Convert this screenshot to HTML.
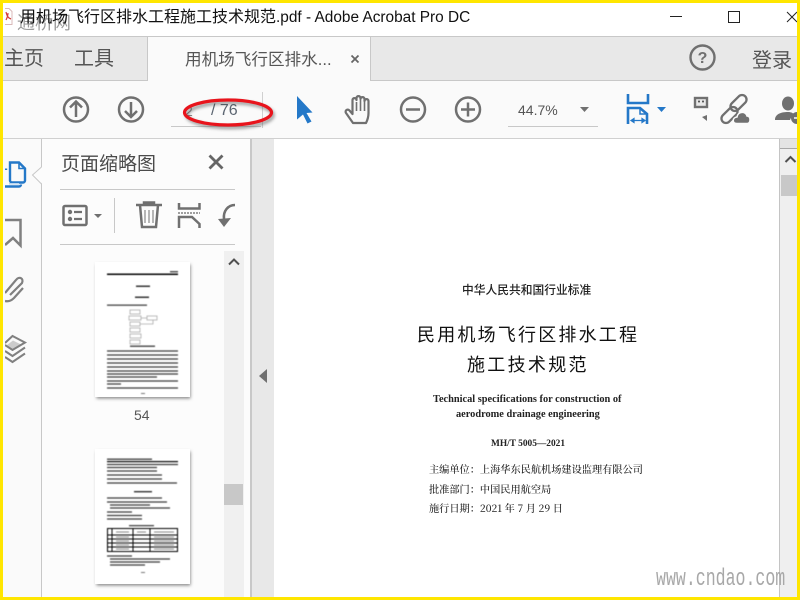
<!DOCTYPE html>
<html><head><meta charset="utf-8">
<style>
html,body{margin:0;padding:0;background:#fff}
#r{position:relative;width:800px;height:600px;overflow:hidden;background:#fff;font-family:"Liberation Sans","Noto Sans CJK SC",sans-serif}
.a{position:absolute;white-space:nowrap;line-height:1}
svg{position:absolute;left:0;top:0}
</style></head><body>
<div id="r">
<!-- regions -->
<div class="a" style="left:0;top:36px;width:800px;height:1px;background:#c8c8c8"></div>
<div class="a" style="left:0;top:37px;width:800px;height:43px;background:#e8e8e8"></div>
<div class="a" style="left:0;top:80px;width:800px;height:1px;background:#c8c8c8"></div>
<div class="a" style="left:0;top:81px;width:800px;height:57px;background:#fafafa"></div>
<div class="a" style="left:147px;top:37px;width:224px;height:44px;background:#fafafa;border-left:1px solid #c8c8c8;border-right:1px solid #c8c8c8;box-sizing:border-box"></div>
<div class="a" style="left:0;top:138px;width:800px;height:1px;background:#d0d0d0"></div>
<div class="a" style="left:0;top:139px;width:41px;height:461px;background:#fafafa"></div>
<div class="a" style="left:41px;top:139px;width:1px;height:461px;background:#c8c8c8"></div>
<div class="a" style="left:42px;top:139px;width:208px;height:461px;background:#fcfcfc"></div>
<div class="a" style="left:250px;top:139px;width:2px;height:461px;background:#c8c8c8"></div>
<div class="a" style="left:252px;top:139px;width:22px;height:461px;background:#e8e8e8"></div>
<div class="a" style="left:274px;top:139px;width:505px;height:461px;background:#fff"></div>
<div class="a" style="left:779px;top:139px;width:1px;height:461px;background:#c4c4c4"></div>
<div class="a" style="left:780px;top:139px;width:17px;height:461px;background:#efefef"></div>
<div class="a" style="left:780px;top:139px;width:17px;height:9px;background:#e4e4e4;border-bottom:1px solid #a8a8a8"></div>
<div class="a" style="left:781px;top:175px;width:16px;height:21px;background:#c8c8c8"></div>
<!-- thumb scrollbar -->
<div class="a" style="left:224px;top:251px;width:20px;height:349px;background:#f0f0f0"></div>
<div class="a" style="left:224px;top:484px;width:19px;height:21px;background:#c8c8c8"></div>
<!-- panel rules -->
<div class="a" style="left:60px;top:189px;width:175px;height:1px;background:#c8c8c8"></div>
<div class="a" style="left:60px;top:244px;width:175px;height:1px;background:#c8c8c8"></div>
<div class="a" style="left:114px;top:198px;width:1px;height:35px;background:#c8c8c8"></div>
<div class="a" style="left:171px;top:126px;width:90px;height:1px;background:#c8c8c8"></div>
<div class="a" style="left:262px;top:92px;width:1px;height:36px;background:#d0d0d0"></div>
<div class="a" style="left:508px;top:126px;width:90px;height:1px;background:#c8c8c8"></div>

<!-- title -->
<div class="a" style="left:17px;top:14px;font-size:18px;color:#9c9c9c">通桥网</div>
<div class="a" style="left:20px;top:10px;font-size:16px;color:#111">用机场飞行区排水工程施工技术规范<span style="font-size:15.4px">.pdf - Adobe Acrobat Pro DC</span></div>
<!-- tabs -->
<div class="a" style="left:4px;top:49px;font-size:20px;color:#555">主页</div>
<div class="a" style="left:74px;top:49px;font-size:20px;color:#555">工具</div>
<div class="a" style="left:185px;top:52px;font-size:16.6px;color:#555">用机场飞行区排水...</div>
<div class="a" style="left:752px;top:51px;font-size:20px;color:#555">登录</div>
<!-- toolbar text -->
<div class="a" style="left:185px;top:104px;font-size:14px;color:#888">2</div>
<div class="a" style="left:211px;top:103px;font-size:16px;color:#5a6470">/ 76</div>
<div class="a" style="left:518px;top:103px;font-size:14px;color:#555">44.7%</div>
<!-- panel text -->
<div class="a" style="left:61px;top:155px;font-size:19px;color:#4b4b4b">页面缩略图</div>
<div class="a" style="left:134px;top:408px;font-size:14px;color:#555">54</div>

<!-- page text -->
<div class="a" style="left:462px;top:284px;font-size:11.75px;color:#222;font-family:'Noto Sans CJK SC',sans-serif;font-weight:500">中华人民共和国行业标准</div>
<div class="a" style="left:417px;top:325px;font-size:18px;letter-spacing:2.2px;color:#111;font-family:'Noto Sans CJK SC',sans-serif">民用机场飞行区排水工程</div>
<div class="a" style="left:467px;top:355px;font-size:18px;letter-spacing:2.3px;color:#111;font-family:'Noto Sans CJK SC',sans-serif">施工技术规范</div>
<div class="a" style="left:433px;top:395px;font-size:10.35px;font-weight:bold;color:#222;font-family:'Liberation Serif',serif">Technical specifications for construction of</div>
<div class="a" style="left:456px;top:410px;font-size:10.35px;font-weight:bold;color:#222;font-family:'Liberation Serif',serif">aerodrome drainage engineering</div>
<div class="a" style="left:491px;top:440px;font-size:9.4px;font-weight:bold;color:#222;font-family:'Liberation Serif',serif">MH/T 5005—2021</div>
<div class="a" style="left:429px;top:464px;font-size:10.2px;color:#222;font-family:'Noto Serif CJK SC',serif;font-weight:500">主编单位：上海华东民航机场建设监理有限公司</div>
<div class="a" style="left:429px;top:484px;font-size:10.2px;color:#222;font-family:'Noto Serif CJK SC',serif;font-weight:500">批准部门：中国民用航空局</div>
<div class="a" style="left:429px;top:503px;font-size:10.2px;color:#222;font-family:'Noto Serif CJK SC',serif;font-weight:500">施行日期：2021 年 7 月 29 日</div>

<svg width="800" height="600" viewBox="0 0 800 600">
<defs>
<filter id="b"><feGaussianBlur stdDeviation=".55"/></filter>
<filter id="s" x="-20%" y="-20%" width="140%" height="140%"><feGaussianBlur stdDeviation="1.5"/></filter>
</defs>
<!-- pdf icon -->
<path d="M5 8.500h4l3 3v13H5" fill="#fff" stroke="#d8b8b8" stroke-width="1"/>
<path d="M6 12c1 4 2 6 5 7M6 20c1-2 2-4 2-7" fill="none" stroke="#d23a3a" stroke-width="1.200"/>
<!-- window controls -->
<path d="M670 16.500h12" stroke="#222" stroke-width="1"/>
<rect x="728.500" y="11.500" width="11" height="11" fill="none" stroke="#222"/>
<path d="M787 12l10 10M797 12l-10 10" stroke="#222" stroke-width="1"/>
<!-- tab close -->
<path d="M351.500 55.500l7 7M358.500 55.500l-7 7" stroke="#666" stroke-width="1.800"/>
<!-- help -->
<circle cx="702.500" cy="57.500" r="12" fill="none" stroke="#707070" stroke-width="2.400"/>
<text x="702.500" y="63" font-size="16" font-weight="bold" fill="#707070" text-anchor="middle" font-family="Liberation Sans">?</text>
<!-- up / down -->
<g fill="none" stroke="#707070" stroke-width="2.500">
<circle cx="76" cy="109.500" r="12"/><path d="M76 117v-15M70 107.500l6-6 6 6"/>
<circle cx="131" cy="109.500" r="12"/><path d="M131 102v15M125 111l6 6 6-6"/>
<circle cx="413" cy="109.500" r="12"/><path d="M406 109.500h14"/>
<circle cx="468" cy="109.500" r="12"/><path d="M461 109.500h14M468 102.500v14"/>
</g>
<!-- arrow cursor -->
<path d="M297 96l15.500 16.500-6 .5 5 8.500-4 2-4.500-9-6 5z" fill="#2478c8"/>
<!-- hand -->
<path d="M353 123l-7-10c-1.500-2.500 1.500-4.500 3.500-2.500l3 3.500V100c0-2.500 4-2.500 4 0v-2c0-2.500 4-2.500 4 0v1c0-2.500 4-2.500 4 0v2c0-2.500 4-2.500 4 0v12c0 4-1 7-2.500 10z" fill="none" stroke="#707070" stroke-width="2.200" stroke-linejoin="round"/>
<path d="M356.500 102v9M360.500 100v11M364.500 101v10" stroke="#707070" stroke-width="1.600"/>
<!-- zoom arrow -->
<path d="M580 107h9l-4.500 5z" fill="#707070"/>
<!-- fit width icon -->
<g fill="none" stroke="#2478c8" stroke-width="2.600">
<path d="M628 94v9h20v-9"/>
<path d="M628 124v-16h12l7 6v10"/>
</g>
<path d="M640 108v6h7" fill="none" stroke="#2478c8" stroke-width="1.500"/>
<path d="M631 120.500h14M631 120.500l3-2v4zM645 120.500l-3-2v4z" fill="#2478c8" stroke="#2478c8" stroke-width="1.200"/>
<path d="M657 107h9l-4.500 5z" fill="#2478c8"/>
<!-- stamp / comment -->
<rect x="695" y="98" width="12" height="9" fill="#e8e8e8" stroke="#707070" stroke-width="2.400"/>
<path d="M698 101.500h2M702 101.500h2" stroke="#555" stroke-width="1.800"/>
<path d="M702 117l5 4v-6z" fill="#707070"/>
<!-- link cloud -->
<g fill="none" stroke="#707070" stroke-width="2.300">
<rect x="720" y="110.500" width="19" height="9" rx="4.500" transform="rotate(-45 729.500 115)"/>
<rect x="729" y="98.500" width="19" height="9" rx="4.500" transform="rotate(-45 738.500 103)"/>
</g>
<path d="M738 123.500c-5 0-5-6 0-6.500 1-6 9-6 10-1 4 0 4 7.500 0 7.500z" fill="#707070" stroke="#fafafa" stroke-width="1.500" transform="translate(-1 0)"/>
<!-- person -->
<ellipse cx="788" cy="103.500" rx="6" ry="7" fill="#707070"/>
<path d="M775 120c0-6 6-8 13-8 3 0 4 1 5 1l-3 7z" fill="#707070"/>
<circle cx="797" cy="118" r="6" fill="#707070"/>
<path d="M794 118h5" stroke="#fafafa" stroke-width="1.500"/>
<!-- red ellipse -->
<ellipse cx="230" cy="115" rx="43" ry="12.500" fill="none" stroke="#444" stroke-width="3.200" opacity=".55" filter="url(#s)"/>
<ellipse cx="228" cy="112.500" rx="43.500" ry="12.500" fill="none" stroke="#e8141c" stroke-width="3.200"/>
<!-- rail icons -->
<path d="M10 162.500h9l6 6v12a2 2 0 0 1-2 2H12a2 2 0 0 1-2-2z" fill="#fafafa" stroke="#2478c8" stroke-width="2.400"/>
<path d="M19 162.500v6h6" fill="none" stroke="#2478c8" stroke-width="1.600"/>
<path d="M6 168.500v1.500" stroke="#2478c8" stroke-width="2.400"/>
<path d="M5 186.500h14a2 2 0 0 0 2-2" fill="none" stroke="#2478c8" stroke-width="2.400"/>
<path d="M9 183h10v1.500H9z" fill="#b8d4ee"/>
<path d="M42.500 166.500l-10 8.500 10 9z" fill="#fcfcfc"/>
<path d="M41.500 167l-9 8 9 9" fill="none" stroke="#c8c8c8"/>
<path d="M5 220h15.500v25.500l-7.500-7.500-8 7" fill="none" stroke="#808080" stroke-width="2.500"/>
<g fill="none" stroke="#808080" stroke-width="2.200">
<path d="M5 301C9 302 12 300 14 298L23 288"/>
<path d="M5 293L16 280C19 276 24 278 22 283L10 295"/>
</g>
<path d="M7 345l6-4.500 9 4.500-9 5.500z" fill="#ccc"/>
<g fill="none" stroke="#808080" stroke-width="2">
<path d="M5 343L12.500 336 25 342.500 12.500 350 5 345"/>
<path d="M25 347.500L12.500 356 5 351"/>
<path d="M25 353.500L12.500 362 5 357"/>
</g>
<!-- panel close -->
<path d="M209.500 155.500l13 13M222.500 155.500l-13 13" stroke="#666" stroke-width="2.800"/>
<!-- panel toolbar -->
<rect x="63.500" y="206" width="23" height="19" rx="1.500" fill="none" stroke="#707070" stroke-width="2.500"/>
<circle cx="70" cy="212" r="2.200" fill="#707070"/><circle cx="70" cy="219" r="2.200" fill="#707070"/>
<path d="M74 212h8M74 219h8" stroke="#707070" stroke-width="2.200"/>
<path d="M94 214h8l-4 4z" fill="#707070"/>
<g fill="none" stroke="#707070" stroke-width="2.500">
<path d="M136 205h26M144 205v-2.500h10v2.500"/>
<path d="M140 205l2 22h14l2-22"/>
</g>
<path d="M145 210v13M149 210v13M153 210v13" stroke="#909090" stroke-width="1.300"/>
<g fill="none" stroke="#707070" stroke-width="2.500">
<path d="M179 203v5.500h20.500V203"/>
<path d="M179 228v-11h13l7.500 7v4"/>
</g>
<path d="M178 213h22" stroke="#808080" stroke-width="1.600" stroke-dasharray="2 1"/>
<path d="M235 205c-7 0-12 6-11 14" fill="none" stroke="#707070" stroke-width="2.600"/>
<path d="M218 219l13-1-7 9z" fill="#707070"/>
<!-- thumb scroll arrows -->
<path d="M229 264.500l5-5 5 5" fill="none" stroke="#505050" stroke-width="2"/>
<path d="M785.500 162l5-5 5 5" fill="none" stroke="#505050" stroke-width="2"/>
<!-- collapse arrow -->
<path d="M259 376l8-7v14z" fill="#707070"/>

<!-- thumbnail 1 -->
<rect x="96.500" y="264.500" width="94" height="134" fill="#888" filter="url(#s)"/>
<rect x="95" y="262" width="95" height="135" fill="#fff"/>
<g filter="url(#b)">
<rect x="107" y="273.500" width="71" height="1.500" fill="#000"/>
<rect x="170" y="271" width="8" height="1.500" fill="#555"/>
<rect x="136" y="285.500" width="14" height="1.500" fill="#333"/>
<rect x="135" y="296.500" width="14" height="1.500" fill="#333"/>
<rect x="107" y="304.500" width="40" height="1.300" fill="#444"/>
<g fill="none" stroke="#aaa" stroke-width=".8">
<rect x="130" y="310" width="10" height="4"/><rect x="129" y="316" width="12" height="4"/><rect x="147" y="316" width="10" height="4"/>
<rect x="130" y="322" width="10" height="4"/><rect x="130" y="328" width="10" height="4"/><rect x="130" y="334" width="11" height="4"/><rect x="130" y="340" width="10" height="4"/>
<path d="M141 318h6M140 324h13v-4"/>
</g>
<rect x="130" y="345.500" width="25" height="1.400" fill="#444"/>
<path d="M107 351h71M107 355h71M107 359h71M107 363h71M107 367h71M107 371h71M107 374h71M107 377h50M107 381h71M107 384h14M107 388h71" stroke="#3a3a3a" stroke-width="1.300"/>
<rect x="141" y="393" width="4" height="1" fill="#777"/>
</g>
<!-- thumbnail 2 -->
<rect x="96.500" y="451.500" width="94" height="134" fill="#888" filter="url(#s)"/>
<rect x="95" y="449" width="95" height="135" fill="#fff"/>
<g filter="url(#b)">
<rect x="107" y="458.500" width="45" height="1.400" fill="#444"/>
<rect x="107" y="461" width="71" height="1.200" fill="#000"/>
<path d="M107 464.500h71M107 467.500h50M107 471h50M107 475h55M107 479h55M107 483h70" stroke="#3a3a3a" stroke-width="1.300"/>
<rect x="134" y="491" width="18" height="1.400" fill="#333"/>
<path d="M107 498h55M107 502h60M110 505h40M110 508h60M107 512h25M107 515.500h35M107 519h35" stroke="#3a3a3a" stroke-width="1.300"/>
<rect x="129" y="525" width="25" height="1.300" fill="#444"/>
<g fill="none" stroke="#000" stroke-width="1">
<rect x="107.500" y="528.500" width="70" height="23"/>
<path d="M112 529v23M133 529v23M150 529v23M108 535h70M108 539h70M108 543h70M108 547h70"/>
</g>
<path d="M116 532h13M137 532h9M154 532h20M116 537h13M154 537h20M116 541h13M154 541h20M116 545h13M154 545h20M116 549h13M154 549h20" stroke="#888" stroke-width="1"/>
<path d="M107 556h25M110 559h60M110 562h50M110 565h35" stroke="#3a3a3a" stroke-width="1.300"/>
<rect x="141" y="572" width="4" height="1" fill="#777"/>
</g>
</svg>

<!-- 55 partial label -->
<div class="a" style="left:134px;top:595px;font-size:14px;color:#555">55</div>
<!-- watermark -->
<div class="a" style="left:656px;top:568px;font-size:24px;color:#a8a8a8;font-family:'Liberation Mono',monospace;transform:scaleX(.69);transform-origin:left top">www.cndao.com</div>

<!-- left clip strip -->
<div class="a" style="left:3px;top:139px;width:2px;height:461px;background:#fafafa"></div>
<!-- yellow frame -->
<div class="a" style="left:0;top:0;width:800px;height:3px;background:#ffe600"></div>
<div class="a" style="left:0;top:0;width:3px;height:600px;background:#ffe600"></div>
<div class="a" style="left:797px;top:0;width:3px;height:600px;background:#ffe600"></div>
<div class="a" style="left:0;top:597px;width:800px;height:3px;background:#ffe600"></div>
</div>
</body></html>
